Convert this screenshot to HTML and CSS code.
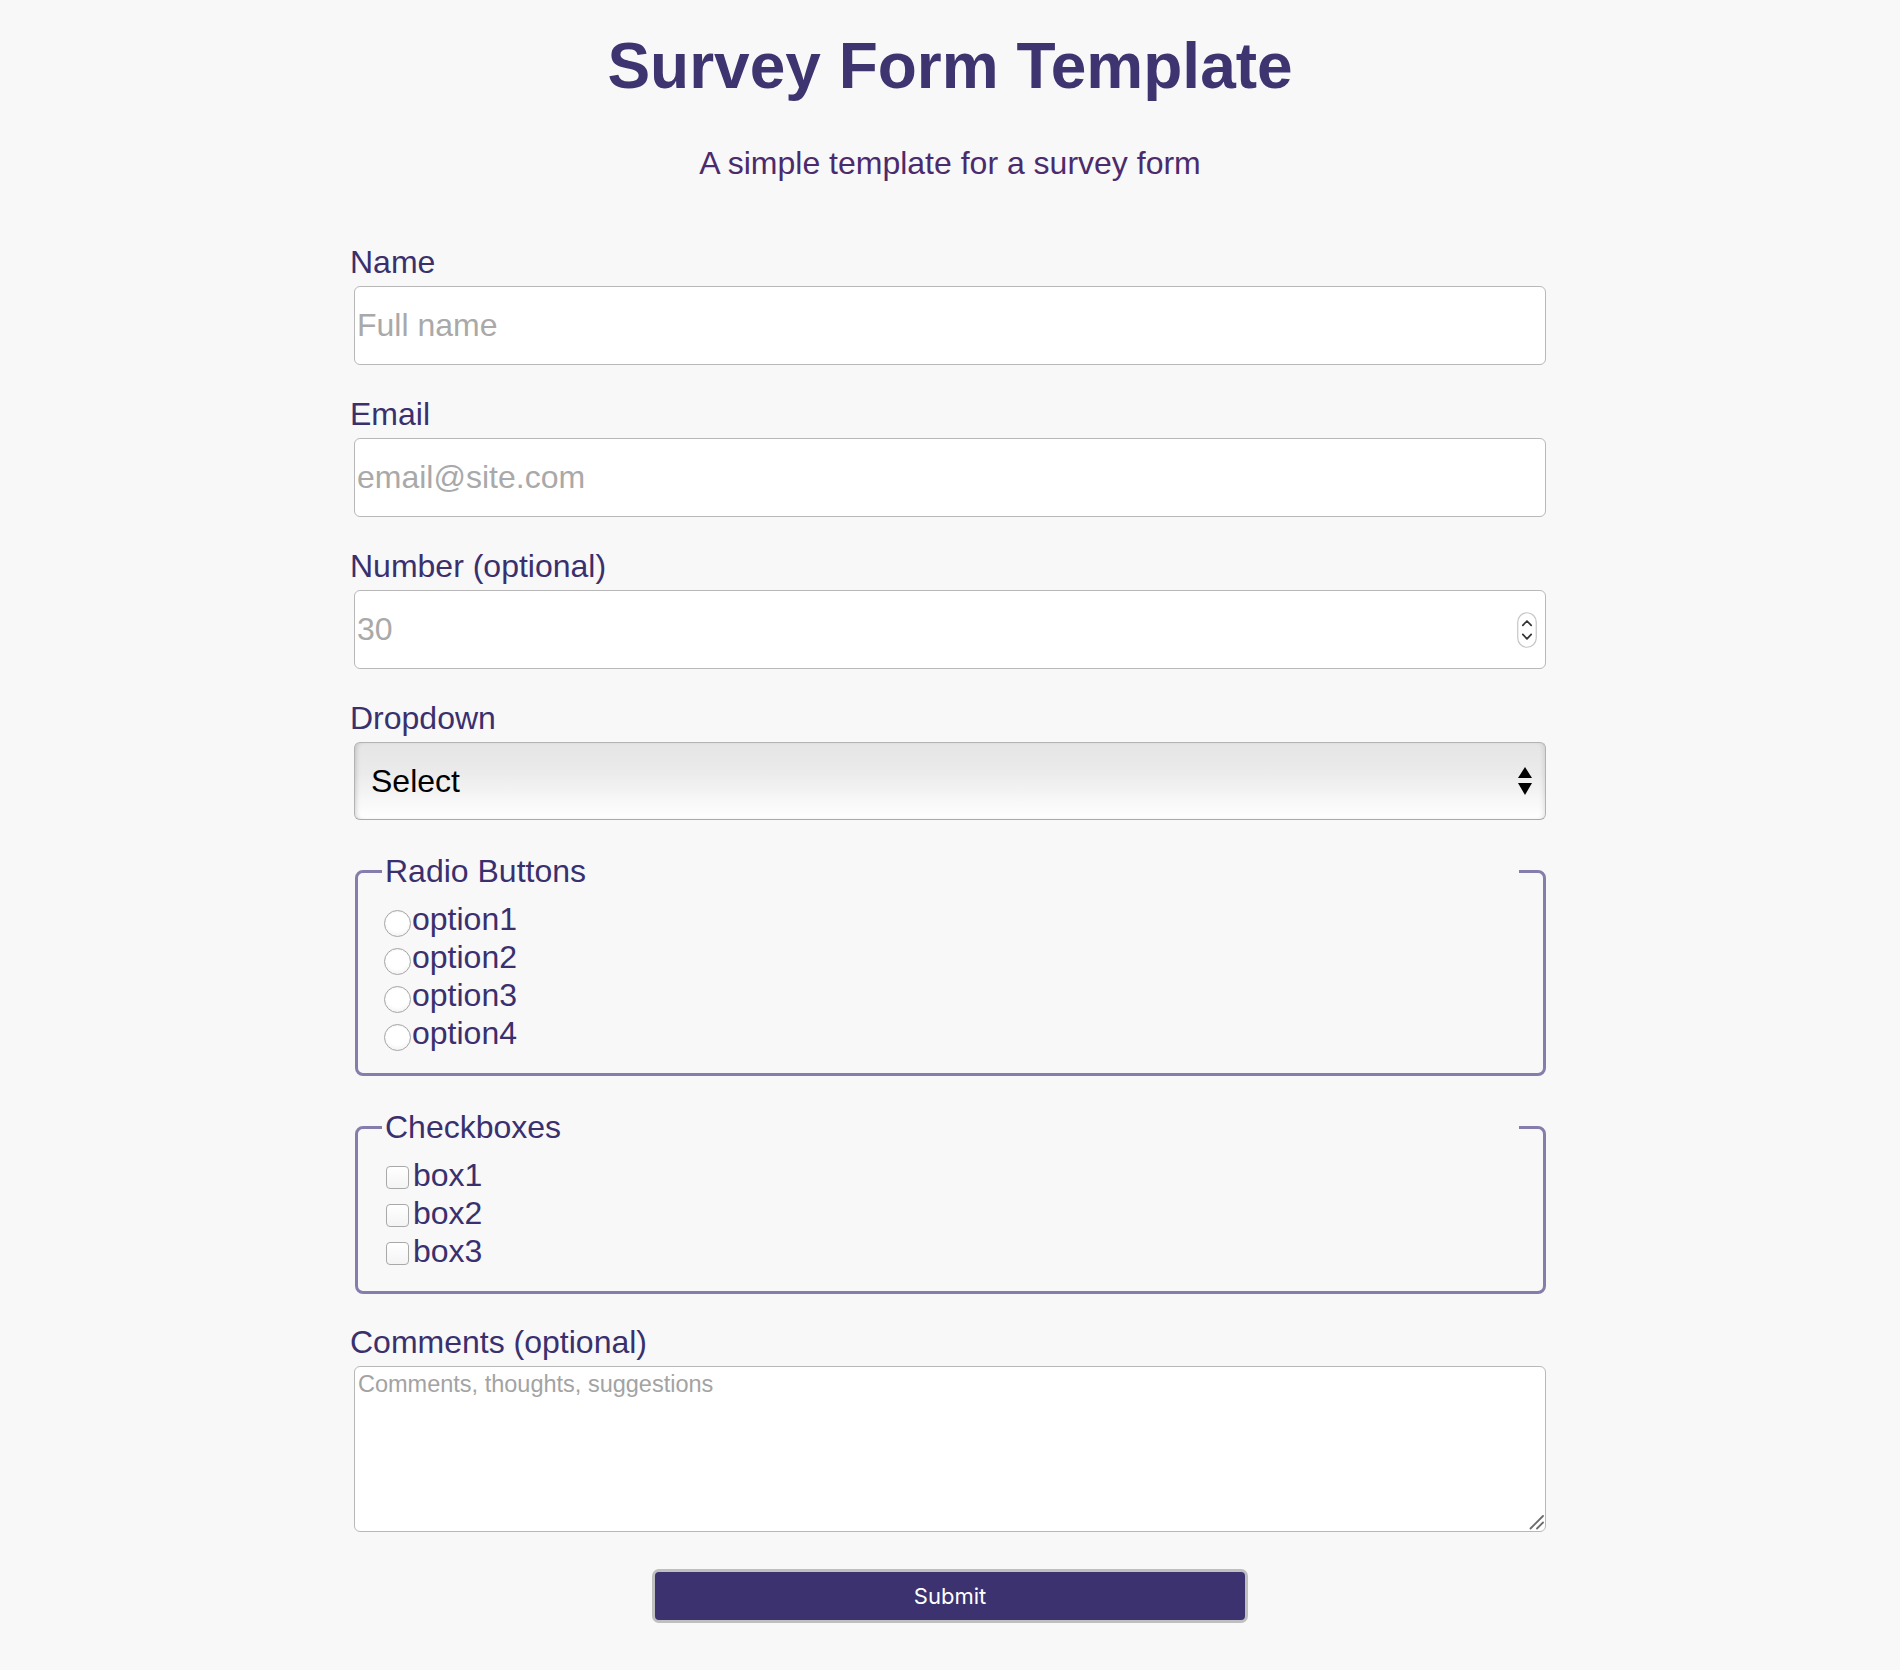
FILE: index.html
```html
<!DOCTYPE html>
<html lang="en">
<head>
<meta charset="utf-8">
<title>Survey Form Template</title>
<link rel="stylesheet" href="styles.css">
</head>
<body>
<main class="page">
  <header class="header">
    <h1 class="title">Survey Form Template</h1>
    <p class="subtitle">A simple template for a survey form</p>
  </header>
  <form class="survey">
    <div class="field">
      <label class="label" for="name">Name</label>
      <input class="text-input" id="name" type="text" placeholder="Full name">
    </div>
    <div class="field">
      <label class="label" for="email">Email</label>
      <input class="text-input" id="email" type="email" placeholder="email@site.com">
    </div>
    <div class="field">
      <label class="label" for="number">Number (optional)</label>
      <div class="number-wrap">
        <input class="text-input number" id="number" type="number" placeholder="30">
        <svg class="spinner" viewBox="0 0 20 36" aria-hidden="true">
          <rect x="0.75" y="0.75" width="18.5" height="34.5" rx="9.25" fill="#fff" stroke="#c6c6c6" stroke-width="1.2"/>
          <path d="M5.8 13.4 L10 9 L14.2 13.4" fill="none" stroke="#333" stroke-width="1.7" stroke-linecap="round" stroke-linejoin="round"/>
          <path d="M5.8 22.4 L10 26.8 L14.2 22.4" fill="none" stroke="#333" stroke-width="1.7" stroke-linecap="round" stroke-linejoin="round"/>
        </svg>
      </div>
    </div>
    <div class="field">
      <label class="label" for="dropdown">Dropdown</label>
      <div class="select-wrap">
        <select class="select" id="dropdown">
          <option>Select</option>
          <option>Option 1</option>
          <option>Option 2</option>
        </select>
        <svg class="select-arrows" viewBox="0 0 14 28" aria-hidden="true">
          <polygon points="7,0 14,11 0,11" fill="#000"/>
          <polygon points="0,16 14,16 7,28" fill="#000"/>
        </svg>
      </div>
    </div>
    <fieldset class="group">
      <legend class="legend">Radio Buttons</legend>
      <label class="choice"><input class="radio" type="radio" name="opt" value="1">option1</label>
      <label class="choice"><input class="radio" type="radio" name="opt" value="2">option2</label>
      <label class="choice"><input class="radio" type="radio" name="opt" value="3">option3</label>
      <label class="choice"><input class="radio" type="radio" name="opt" value="4">option4</label>
    </fieldset>
    <fieldset class="group">
      <legend class="legend">Checkboxes</legend>
      <label class="choice"><input class="check" type="checkbox" value="1">box1</label>
      <label class="choice"><input class="check" type="checkbox" value="2">box2</label>
      <label class="choice"><input class="check" type="checkbox" value="3">box3</label>
    </fieldset>
    <div class="field comments">
      <label class="label" for="comments">Comments (optional)</label>
      <div class="textarea-wrap">
        <textarea class="textarea" id="comments" placeholder="Comments, thoughts, suggestions"></textarea>
        <svg class="resize-handle" viewBox="0 0 16 16" aria-hidden="true">
          <path d="M1.5 14.5 L14 2" stroke="#6b6b6b" stroke-width="1.8" stroke-linecap="round"/>
          <path d="M8 14.5 L14 8.5" stroke="#6b6b6b" stroke-width="1.8" stroke-linecap="round"/>
        </svg>
      </div>
    </div>
    <div class="actions">
      <button class="submit" type="submit">Submit</button>
    </div>
  </form>
</main>
</body>
</html>
```
FILE: styles.css
```css
* {
  box-sizing: border-box;
}

html,
body {
  margin: 0;
  background: #f8f8f8;
}

body {
  font-family: "Liberation Sans", Arial, sans-serif;
  color: #3a306e;
  min-height: 1670px;
}

.page {
  width: 1200px;
  margin: 0 auto;
  padding-top: 29px;
}

.title {
  margin: 0;
  text-align: center;
  font-size: 64px;
  line-height: 74px;
  font-weight: 700;
  color: #3d3470;
}

.subtitle {
  margin: 42px 0 0;
  text-align: center;
  font-size: 32px;
  line-height: 37px;
  color: #4b2b6c;
}

.survey {
  margin-top: 62px;
}

.field {
  margin-bottom: 31px;
}

.label {
  display: block;
  font-size: 32px;
  line-height: 37px;
  margin-bottom: 5px;
  color: #3a306e;
}

.text-input {
  display: block;
  width: calc(100% - 8px);
  margin: 0 4px;
  height: 79px;
  border: 1px solid #b8b8b8;
  border-radius: 6px;
  background: #fff;
  font: 32px "Liberation Sans", Arial, sans-serif;
  padding: 0 2px;
  color: #333;
  outline: none;
}

.text-input::placeholder {
  color: #a9a9a9;
}

.number {
  -moz-appearance: textfield;
}

.number::-webkit-inner-spin-button,
.number::-webkit-outer-spin-button {
  -webkit-appearance: none;
  margin: 0;
}

.number-wrap,
.select-wrap,
.textarea-wrap {
  position: relative;
}

.spinner {
  position: absolute;
  right: 13px;
  top: 22px;
  width: 20px;
  height: 36px;
  pointer-events: none;
}

.select {
  display: block;
  width: calc(100% - 8px);
  margin: 0 4px;
  height: 78px;
  -webkit-appearance: none;
  appearance: none;
  border: 1px solid #b3b3b3;
  border-bottom-color: #a9a9a9;
  border-radius: 6px;
  background: linear-gradient(#e5e5e5 0%, #ebebeb 40%, #f7f7f7 75%, #ffffff 100%);
  box-shadow: inset 4px 0 5px -3px rgba(0, 0, 0, 0.18), inset -4px 0 5px -3px rgba(0, 0, 0, 0.12);
  padding: 0 40px 0 16px;
  font: 32px "Liberation Sans", Arial, sans-serif;
  color: #000;
  outline: none;
}

.select-arrows {
  position: absolute;
  right: 18px;
  top: 25px;
  width: 14px;
  height: 28px;
  pointer-events: none;
}

.group {
  margin: 33px 4px 0 5px;
  border: 3px solid #857dab;
  border-radius: 8px;
  padding: 10px 24px 21px;
  min-width: 0;
}

.legend {
  width: 100%;
  padding: 0 3px;
  font-size: 32px;
  line-height: 37px;
  color: #3a306e;
}

.choice {
  display: block;
  font-size: 32px;
  line-height: 38px;
  color: #3a306e;
}

.radio {
  -webkit-appearance: none;
  appearance: none;
  width: 27px;
  height: 27px;
  margin: 0 1px 0 2px;
  border: 1px solid #a6a6a6;
  border-radius: 50%;
  background: radial-gradient(circle at 50% 35%, #ffffff 55%, #e9e9e9 100%);
  box-shadow: inset 0 1px 1px rgba(0, 0, 0, 0.06);
  vertical-align: -7px;
}

.check {
  -webkit-appearance: none;
  appearance: none;
  width: 23px;
  height: 23px;
  margin: 0 4px 0 4px;
  border: 1px solid #a9a9a9;
  border-radius: 4px;
  background: linear-gradient(#ffffff, #f4f4f4);
  vertical-align: -3px;
}

.field.comments {
  margin-top: 30px;
  margin-bottom: 0;
}

.textarea {
  display: block;
  width: calc(100% - 8px);
  margin: 0 4px;
  height: 166px;
  border: 1px solid #b8b8b8;
  border-radius: 6px;
  background: #fff;
  font: 23.5px "Liberation Sans", Arial, sans-serif;
  padding: 4px 3px;
  resize: none;
  outline: none;
}

.textarea::placeholder {
  color: #a3a3a3;
}

.resize-handle {
  position: absolute;
  right: 5px;
  bottom: 2px;
  width: 16px;
  height: 16px;
  pointer-events: none;
}

.actions {
  margin-top: 37px;
  text-align: center;
}

.submit {
  width: 596px;
  height: 54px;
  border: 3px solid #bfbfbf;
  border-radius: 7px;
  background: #3c326f;
  color: #fff;
  font: 22px Inter, "Noto Sans", sans-serif;
  cursor: pointer;
}
```
